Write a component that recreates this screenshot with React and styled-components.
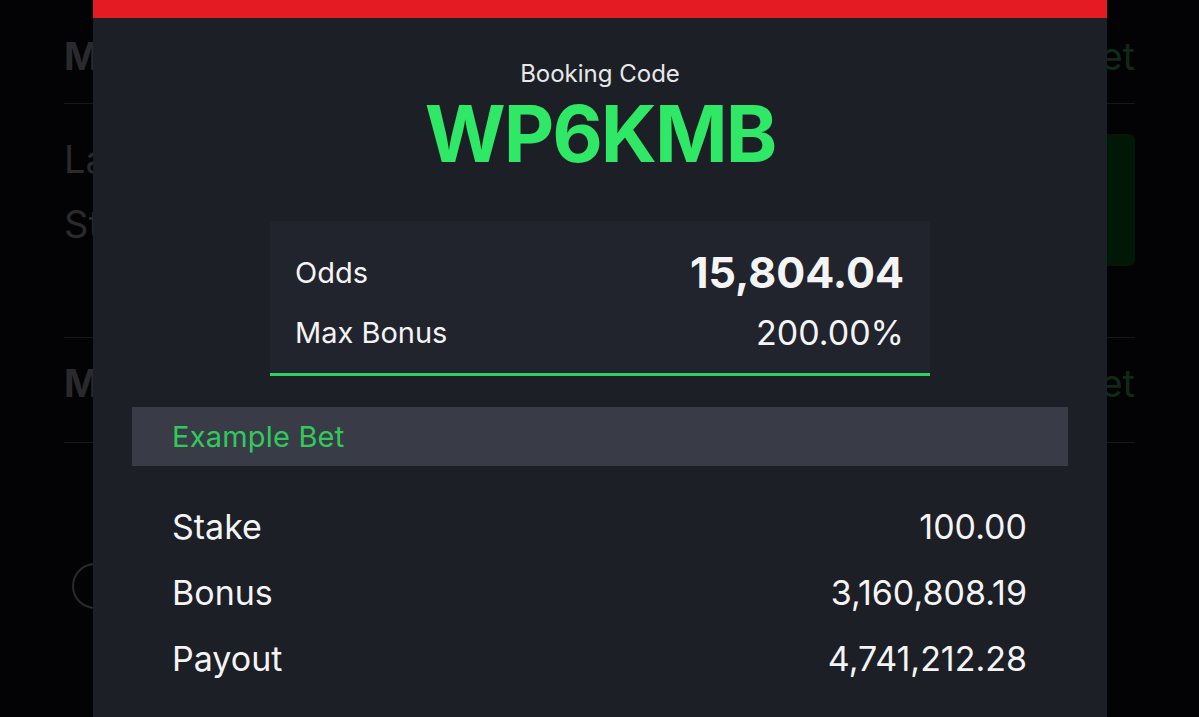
import React from 'react';
import styled, { createGlobalStyle } from 'styled-components';

const GlobalStyle = createGlobalStyle`
  html, body {
    margin: 0;
    padding: 0;
    background: #030305;
    font-family: Inter, "Noto Sans", "Liberation Sans", sans-serif;
  }
  #root {
    width: 1199px;
    height: 717px;
    overflow: hidden;
  }
`;

const Screen = styled.div`
  position: relative;
  width: 1199px;
  height: 717px;
  overflow: hidden;
  background: #030305;
`;

/* dimmed page behind the sheet */
const Backdrop = styled.div`
  display: flex;
  flex-direction: column;
  padding: 0 64px;
  color: #2a2a2e;
`;

const BackRow = styled.div`
  display: flex;
  justify-content: space-between;
  align-items: ${p => (p.top ? 'flex-start' : 'center')};
  box-sizing: border-box;
  padding-top: ${p => p.pt || 0}px;
  padding-bottom: ${p => p.pb || 0}px;
  height: ${p => p.h}px;
  border-bottom: ${p => (p.line ? '1px solid #17171a' : 'none')};
  font-size: 38px;
  font-weight: ${p => (p.bold ? 700 : 400)};
`;

const BackGreen = styled.span`
  color: #0f2a15;
  font-weight: 400;
`;

const BackLines = styled.div`
  display: flex;
  flex-direction: column;
  gap: 21px;
  padding-top: 3px;
  line-height: 44px;
`;

const BackButton = styled.div`
  width: 120px;
  height: 132px;
  border-radius: 6px;
  background: #021806;
`;

const BackCircle = styled.div`
  width: 42px;
  height: 42px;
  margin: 120px 0 0 8px;
  border: 2px solid #2a2a2c;
  border-radius: 50%;
`;

/* booking code sheet */
const Sheet = styled.div`
  position: absolute;
  top: 0;
  left: 93px;
  width: 1014px;
  height: 717px;
  background: #1d1f26;
  display: flex;
  flex-direction: column;
  align-items: center;
`;

const RedBar = styled.div`
  align-self: stretch;
  height: 18px;
  background: #e41b23;
`;

const CodeLabel = styled.div`
  margin-top: 42px;
  font-size: 24px;
  line-height: 28px;
  color: #e8e8ea;
`;

const Code = styled.div`
  margin-top: 2px;
  font-size: 78px;
  line-height: 88px;
  font-weight: 700;
  letter-spacing: -2px;
  color: #2fe866;
`;

const OddsBox = styled.div`
  margin-top: 43px;
  width: 660px;
  box-sizing: border-box;
  padding: 26px 26px 21px 25px;
  background: #22242d;
  border-bottom: 3px solid #2fd25f;
  display: flex;
  flex-direction: column;
  gap: 15px;
`;

const Line = styled.div`
  display: flex;
  justify-content: space-between;
  align-items: center;
  height: ${p => p.h}px;
  color: #f4f4f5;
`;

const Label = styled.span`
  font-size: ${p => p.size}px;
`;

const Value = styled.span`
  font-size: ${p => p.size}px;
  font-weight: ${p => (p.bold ? 700 : 400)};
`;

const ExampleBar = styled.div`
  margin-top: 31px;
  align-self: stretch;
  margin-left: 39px;
  margin-right: 39px;
  height: 59px;
  padding: 0 40px;
  display: flex;
  align-items: center;
  background: #393c47;
  color: #31c95c;
  font-size: 29px;
  letter-spacing: 0.2px;
`;

const Rows = styled.div`
  align-self: stretch;
  margin: 40px 80px 0 79px;
  display: flex;
  flex-direction: column;
  gap: 26px;
`;

const RowLine = styled.div`
  display: flex;
  justify-content: space-between;
  align-items: center;
  height: 40px;
  color: #f4f4f5;
  font-size: 34px;
`;

const rows = [
  ['Stake', '100.00'],
  ['Bonus', '3,160,808.19'],
  ['Payout', '4,741,212.28'],
];

export default function App() {
  return (
    <Screen>
      <GlobalStyle />
      <Backdrop>
        <BackRow h={104} pt={8} line bold>
          <span>My Bets</span>
          <BackGreen>Reset</BackGreen>
        </BackRow>
        <BackRow h={234} pt={30} line top>
          <BackLines>
            <span>Last Booking</span>
            <span>Stake</span>
          </BackLines>
          <BackButton />
        </BackRow>
        <BackRow h={105} pb={14} line bold>
          <span>My Bets</span>
          <BackGreen>Reset</BackGreen>
        </BackRow>
        <BackCircle />
      </Backdrop>

      <Sheet>
        <RedBar />
        <CodeLabel>Booking Code</CodeLabel>
        <Code>WP6KMB</Code>
        <OddsBox>
          <Line h={50}>
            <Label size={29}>Odds</Label>
            <Value size={43} bold>15,804.04</Value>
          </Line>
          <Line h={40}>
            <Label size={29}>Max Bonus</Label>
            <Value size={34}>200.00%</Value>
          </Line>
        </OddsBox>
        <ExampleBar>Example Bet</ExampleBar>
        <Rows>
          {rows.map(([k, v]) => (
            <RowLine key={k}>
              <span>{k}</span>
              <span>{v}</span>
            </RowLine>
          ))}
        </Rows>
      </Sheet>
    </Screen>
  );
}
